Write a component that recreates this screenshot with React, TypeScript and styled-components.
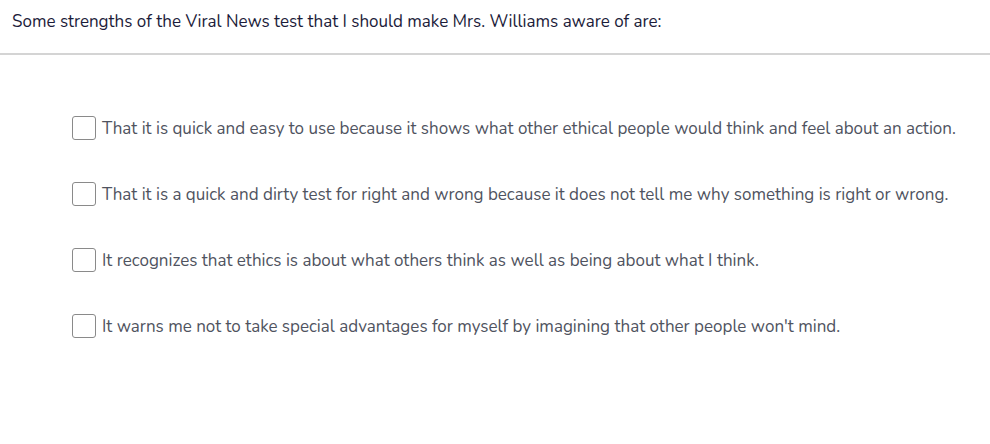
import styled, { createGlobalStyle } from "styled-components";

const GlobalStyle = createGlobalStyle`
  html, body {
    margin: 0;
    padding: 0;
    background: #fff;
  }
  body {
    font-family: Nunito, Lato, "Open Sans", sans-serif;
  }
`;

const options = [
  "That it is quick and easy to use because it shows what other ethical people would think and feel about an action.",
  "That it is a quick and dirty test for right and wrong because it does not tell me why something is right or wrong.",
  "It recognizes that ethics is about what others think as well as being about what I think.",
  "It warns me not to take special advantages for myself by imagining that other people won't mind.",
];

export default function App() {
  return (
    <>
      <GlobalStyle />
      <Page>
        <Question>
          Some strengths of the Viral News test that I should make Mrs. Williams aware of are:
        </Question>
        <OptionList>
          {options.map((text) => (
            <Option key={text}>
              <Box type="checkbox" />
              <span>{text}</span>
            </Option>
          ))}
        </OptionList>
      </Page>
    </>
  );
}

const Page = styled.div`
  width: 990px;
  height: 444px;
  background: #fff;
`;

const Question = styled.div`
  padding: 11px 12px 0;
  height: 42px;
  border-bottom: 2px solid #d4d4d4;
  color: #1c1c3a;
  font-size: 17px;
  line-height: 22px;
`;

const OptionList = styled.div`
  display: flex;
  flex-direction: column;
  gap: 42px;
  padding: 61px 0 0 72px;
`;

const Option = styled.label`
  display: flex;
  align-items: center;
  gap: 6px;
  height: 24px;
  color: #4f5360;
  font-size: 17px;
`;

const Box = styled.input`
  appearance: none;
  margin: 0;
  width: 24px;
  height: 24px;
  flex: none;
  border: 1px solid #8a8a8a;
  border-radius: 3px;
  background: #fff;
`;
